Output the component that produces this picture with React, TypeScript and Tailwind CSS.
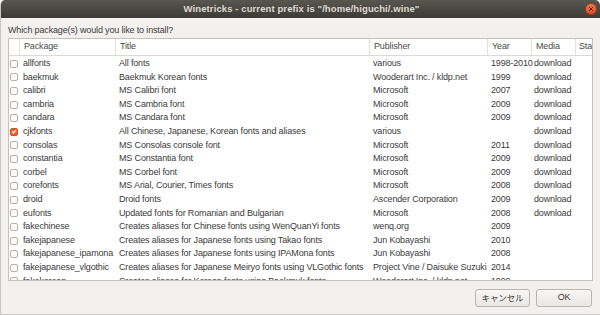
import React from "react";

type Row = [string, string, string, string, string, boolean?];

const rows: Row[] = [
  ["allfonts", "All fonts", "various", "1998-2010", "download"],
  ["baekmuk", "Baekmuk Korean fonts", "Wooderart Inc. / kldp.net", "1999", "download"],
  ["calibri", "MS Calibri font", "Microsoft", "2007", "download"],
  ["cambria", "MS Cambria font", "Microsoft", "2009", "download"],
  ["candara", "MS Candara font", "Microsoft", "2009", "download"],
  ["cjkfonts", "All Chinese, Japanese, Korean fonts and aliases", "various", "", "download", true],
  ["consolas", "MS Consolas console font", "Microsoft", "2011", "download"],
  ["constantia", "MS Constantia font", "Microsoft", "2009", "download"],
  ["corbel", "MS Corbel font", "Microsoft", "2009", "download"],
  ["corefonts", "MS Arial, Courier, Times fonts", "Microsoft", "2008", "download"],
  ["droid", "Droid fonts", "Ascender Corporation", "2009", "download"],
  ["eufonts", "Updated fonts for Romanian and Bulgarian", "Microsoft", "2008", "download"],
  ["fakechinese", "Creates aliases for Chinese fonts using WenQuanYi fonts", "wenq.org", "2009", ""],
  ["fakejapanese", "Creates aliases for Japanese fonts using Takao fonts", "Jun Kobayashi", "2010", ""],
  ["fakejapanese_ipamona", "Creates aliases for Japanese fonts using IPAMona fonts", "Jun Kobayashi", "2008", ""],
  ["fakejapanese_vlgothic", "Creates aliases for Japanese Meiryo fonts using VLGothic fonts", "Project Vine / Daisuke Suzuki", "2014", ""],
  ["fakekorean", "Creates aliases for Korean fonts using Baekmuk fonts", "Wooderart Inc. / kldp.net", "1999", ""],
];

const cols = "grid grid-cols-[11px_96px_254px_118px_44px_44px_1fr]";

const Check = ({ on }: { on?: boolean }) =>
  on ? (
    <span className="flex h-[8px] w-[8px] items-center justify-center rounded-[2px] bg-[#e8653a] border border-[#c9552f]">
      <svg viewBox="0 0 8 8" className="h-[7px] w-[7px]">
        <path d="M1.3 4.1 L3.2 5.9 L6.7 2.1" stroke="#fff" strokeWidth="1.4" fill="none" />
      </svg>
    </span>
  ) : (
    <span className="block h-[8px] w-[8px] rounded-[2px] border border-[#b5b1ab] bg-[#fbfbfa]" />
  );

export default function App() {
  return (
    <div
      className="flex h-[315px] w-[600px] flex-col overflow-hidden rounded-t-[5px] bg-[#f2f1f0] text-[#3c3c3c] border-l border-b border-[#c9c6c1]"
      style={{ fontFamily: '"Liberation Sans", "Noto Sans CJK JP", sans-serif' }}
    >
      {/* title bar */}
      <div className="relative flex h-[18px] shrink-0 items-center justify-center bg-gradient-to-b from-[#57564f] to-[#3c3b37]">
        <span className="pl-[2px] text-[9.5px] font-bold tracking-[0.1px] text-[#dfdbd2]">
          Winetricks - current prefix is "/home/higuchi/.wine"
        </span>
        <span className="absolute right-[3px] top-[3px] flex h-[12px] w-[12px] items-center justify-center rounded-full bg-gradient-to-b from-[#f27b4f] to-[#d94e1c] border border-[#a83c14]">
          <svg viewBox="0 0 8 8" className="h-[6px] w-[6px]">
            <path d="M1.5 1.5 L6.5 6.5 M6.5 1.5 L1.5 6.5" stroke="#4a2010" strokeWidth="1.3" />
          </svg>
        </span>
      </div>

      <div className="flex flex-1 flex-col px-[7px] tracking-[-0.15px]">
        <div className="flex h-[20px] items-center pt-[5px] text-[9px]">Which package(s) would you like to install?</div>

        <div className="h-[243px] overflow-hidden border border-[#c5c2bd] bg-white text-[9px]">
          <div className={`${cols} h-[17px] items-center border-b border-[#dcdad6] text-[#4c4c4c]`}>
            <div className="h-full border-r border-[#e3e1de]" />
            <div className="flex h-full items-center border-r border-[#e3e1de] pl-[4px]">Package</div>
            <div className="flex h-full items-center border-r border-[#e3e1de] pl-[4px]">Title</div>
            <div className="flex h-full items-center border-r border-[#e3e1de] pl-[4px]">Publisher</div>
            <div className="flex h-full items-center border-r border-[#e3e1de] pl-[4px]">Year</div>
            <div className="flex h-full items-center border-r border-[#e3e1de] pl-[4px]">Media</div>
            <div className="flex h-full items-center pl-[3px]">Sta</div>
          </div>
          <div className="pt-[1px]">
            {rows.map(([pkg, title, pub, year, media, on]) => (
              <div key={pkg} className={`${cols} h-[13.6px] items-center whitespace-nowrap`}>
                <div className="flex pl-[1px]">
                  <Check on={on} />
                </div>
                <div className="pl-[3px]">{pkg}</div>
                <div className="pl-[3px]">{title}</div>
                <div className="pl-[3px]">{pub}</div>
                <div className="pl-[3px]">{year}</div>
                <div className="pl-[2px]">{media}</div>
                <div />
              </div>
            ))}
          </div>
        </div>

        <div className="flex justify-end gap-[6px] pt-[8px] pr-[1px]">
          <button className="h-[18px] w-[55px] rounded-[3px] border border-[#b9b5af] bg-gradient-to-b from-[#f8f7f6] to-[#e9e7e4] text-[8.5px] text-[#3c3c3c]">
            キャンセル
          </button>
          <button className="h-[18px] w-[56px] rounded-[3px] border border-[#b9b5af] bg-gradient-to-b from-[#f8f7f6] to-[#e9e7e4] text-[9px] text-[#3c3c3c]">
            OK
          </button>
        </div>
      </div>
    </div>
  );
}
